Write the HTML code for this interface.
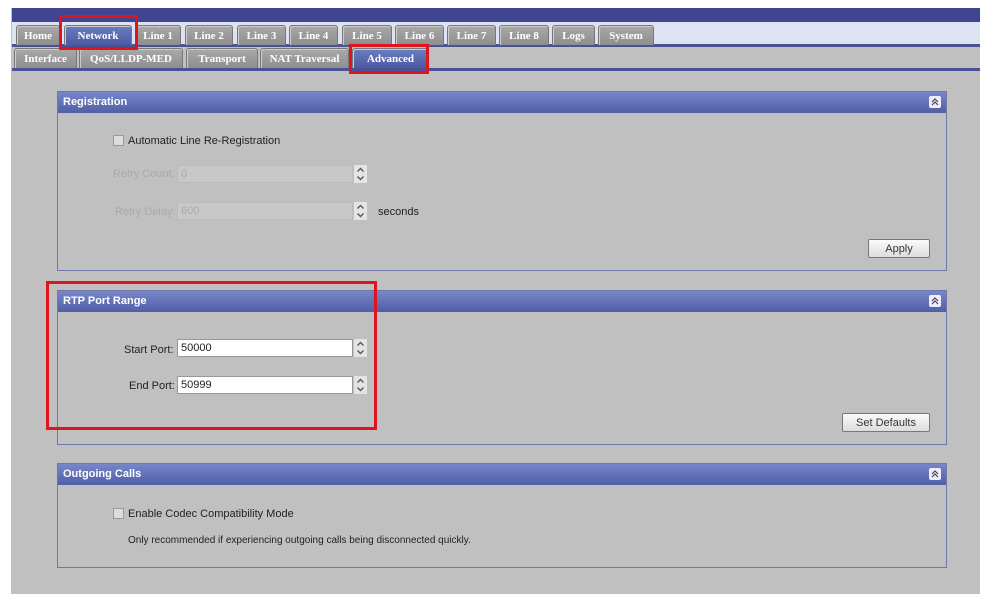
<!DOCTYPE html>
<html><head><style>
*{margin:0;padding:0;box-sizing:border-box}
body{width:987px;height:599px;background:#fff;position:relative;overflow:hidden;font-family:"Liberation Sans",sans-serif;font-size:11px;color:#222}
.a{position:absolute}
.gray{left:11px;top:8px;width:969px;height:586px;background:#c0c0c0}
.top{left:12px;top:8px;width:968px;height:14px;background:#3f4590}
.r1{left:12px;top:22px;width:968px;height:22px;background:#dde3f3}
.l1{left:12px;top:44px;width:968px;height:3px;background:#4a5294}
.l2{left:12px;top:68px;width:968px;height:3px;background:#4a5294}
.tab{position:absolute;height:20px;background:linear-gradient(#a9a9a9,#8e8e8e);border:1px solid #777;border-bottom:none;border-radius:3px 3px 0 0;color:#fff;font-weight:bold;font-size:11px;text-align:center;line-height:20px;font-family:"Liberation Serif",serif;box-shadow:inset 1px 1px 0 #ccc}
.sel{background:linear-gradient(#6d7dc0,#4a5aa4)}
.red{position:absolute;border:3px solid #e0141e}
.panel{position:absolute;left:57px;width:890px;border:1px solid #6f78a8;background:#c0c0c0}
.hd{height:21px;background:linear-gradient(#7887c9,#4f5ea6);color:#fff;font-weight:bold;font-size:11px;line-height:21px;padding-left:5px}
.ic{position:absolute;right:5px;top:4px;width:12px;height:12px;background:#eef;border-radius:2px}
.inp{position:absolute;height:18px;background:#fff;border:1px solid #999;font-size:11px;line-height:17px;padding-left:3px}
.dis{background:#c8c8c8;border-color:#bbb;color:#aaa}
.sp{position:absolute;width:13px;height:18px;background:#e4e4e4}
.btn{position:absolute;height:19px;border:1px solid #777;border-radius:2px;background:linear-gradient(#fafafa,#ddd);font-size:11px;text-align:center;line-height:19px;color:#333}
.cb{position:absolute;width:11px;height:11px;border:1px solid #999;background:#ddd}
.t{position:absolute;font-size:11px;white-space:nowrap}
</style></head><body>
<svg width="0" height="0" style="position:absolute"><defs>
<symbol id="s" viewBox="0 0 13 18"><path d="M3.5 6.5L6.5 3.5L9.5 6.5M3.5 11.5L6.5 14.5L9.5 11.5" fill="none" stroke="#556" stroke-width="1.4"/></symbol>
<symbol id="c" viewBox="0 0 12 12"><path d="M3 6L6 3L9 6M3 9L6 6L9 9" fill="none" stroke="#445" stroke-width="1.2"/></symbol>
</defs></svg>
<div class="a gray"></div>
<div class="a top"></div>
<div class="a r1"></div>
<div class="a l1"></div>
<div class="a l2"></div>
<div class="tab" style="left:16px;top:25px;width:44px">Home</div>
<div class="tab sel" style="left:64px;top:25px;width:68px">Network</div>
<div class="tab" style="left:135px;top:25px;width:46px">Line 1</div>
<div class="tab" style="left:185px;top:25px;width:48px">Line 2</div>
<div class="tab" style="left:237px;top:25px;width:49px">Line 3</div>
<div class="tab" style="left:289px;top:25px;width:49px">Line 4</div>
<div class="tab" style="left:342px;top:25px;width:50px">Line 5</div>
<div class="tab" style="left:395px;top:25px;width:49px">Line 6</div>
<div class="tab" style="left:447px;top:25px;width:49px">Line 7</div>
<div class="tab" style="left:499px;top:25px;width:50px">Line 8</div>
<div class="tab" style="left:552px;top:25px;width:43px">Logs</div>
<div class="tab" style="left:598px;top:25px;width:56px">System</div>
<div class="tab" style="left:14px;top:48px;width:63px">Interface</div>
<div class="tab" style="left:79px;top:48px;width:104px">QoS/LLDP-MED</div>
<div class="tab" style="left:186px;top:48px;width:72px">Transport</div>
<div class="tab" style="left:260px;top:48px;width:89px">NAT Traversal</div>
<div class="tab sel" style="left:352px;top:48px;width:77px">Advanced</div>
<div class="red" style="left:59px;top:15px;width:79px;height:35px"></div>
<div class="red" style="left:349px;top:44px;width:80px;height:30px"></div>

<div class="panel" style="top:91px;height:180px"><div class="hd">Registration</div><svg class="ic" viewBox="0 0 12 12"><use href="#c"/></svg></div>
<div class="cb" style="left:113px;top:135px"></div>
<div class="t" style="left:128px;top:135px">Automatic Line Re-Registration</div>
<div class="t" style="left:113px;top:168px;color:#aaa">Retry Count:</div>
<div class="inp dis" style="left:177px;top:165px;width:176px">0</div>
<svg class="sp" style="left:354px;top:165px"><use href="#s"/></svg>
<div class="t" style="left:115px;top:206px;color:#aaa">Retry Delay:</div>
<div class="inp dis" style="left:177px;top:202px;width:176px">600</div>
<svg class="sp" style="left:354px;top:202px"><use href="#s"/></svg>
<div class="t" style="left:378px;top:206px">seconds</div>
<div class="btn" style="left:868px;top:239px;width:62px">Apply</div>

<div class="panel" style="top:290px;height:155px"><div class="hd">RTP Port Range</div><svg class="ic" viewBox="0 0 12 12"><use href="#c"/></svg></div>
<div class="t" style="left:124px;top:344px">Start Port:</div>
<div class="inp" style="left:177px;top:339px;width:176px">50000</div>
<svg class="sp" style="left:354px;top:339px"><use href="#s"/></svg>
<div class="t" style="left:129px;top:380px">End Port:</div>
<div class="inp" style="left:177px;top:376px;width:176px">50999</div>
<svg class="sp" style="left:354px;top:376px"><use href="#s"/></svg>
<div class="btn" style="left:842px;top:413px;width:88px">Set Defaults</div>
<div class="red" style="left:46px;top:281px;width:331px;height:149px"></div>

<div class="panel" style="top:463px;height:105px"><div class="hd">Outgoing Calls</div><svg class="ic" viewBox="0 0 12 12"><use href="#c"/></svg></div>
<div class="cb" style="left:113px;top:508px"></div>
<div class="t" style="left:128px;top:508px">Enable Codec Compatibility Mode</div>
<div class="t" style="left:128px;top:535px;font-size:10px">Only recommended if experiencing outgoing calls being disconnected quickly.</div>
</body></html>
